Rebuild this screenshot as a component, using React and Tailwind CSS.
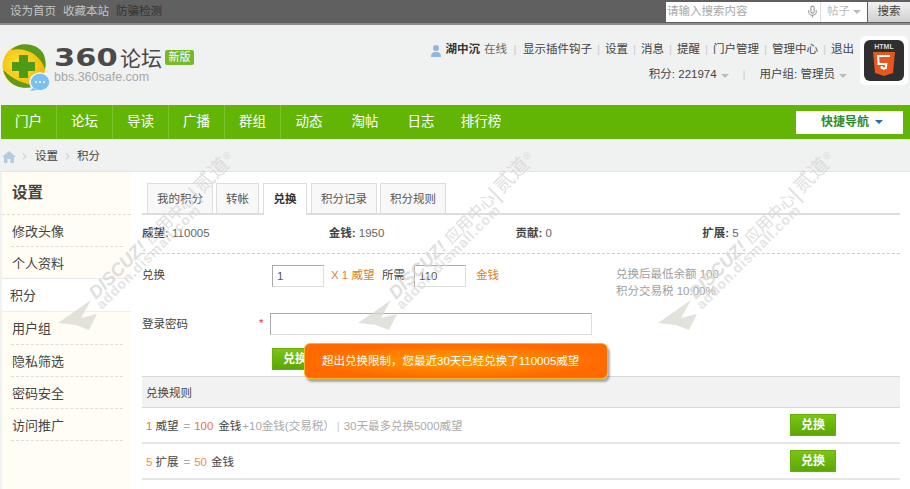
import { Mic, ChevronRight } from 'lucide-react';

const cjk = { fontFamily: '"Liberation Sans","Noto Sans CJK SC",sans-serif' };

function Caret({ color = 'border-t-[#bbb]' }) {
  return <span className={`inline-block w-0 h-0 border-x-[4px] border-x-transparent border-t-[4px] ${color}`} />;
}

function Logo() {
  return (
    <svg width="50" height="50" viewBox="0 0 50 50" className="shrink-0">
      <defs>
        <radialGradient id="ball" cx="0.4" cy="0.45" r="0.6">
          <stop offset="0" stopColor="#ffe23a" />
          <stop offset="1" stopColor="#f2b600" />
        </radialGradient>
      </defs>
      <circle cx="22" cy="23" r="21.5" fill="url(#ball)" />
      <path d="M9 7 C17 -1 33 -1 41 10 C44 16 44 21 43 26 C38 12 25 4 9 7Z" fill="#5c9a1c" />
      <path d="M2 28 C6 42 20 47 32 43 C22 41 10 37 2 28Z" fill="#5c9a1c" stroke="#5c9a1c" />
      <path d="M17 12h9v7h7v9h-7v7h-9v-7h-7v-9h7z" fill="#4e9a16" />
      <ellipse cx="38" cy="39" rx="10" ry="9" fill="#7cc0f0" stroke="#eaf6ff" strokeWidth="1.5" />
      <path d="M31 45l-3 3 7-1z" fill="#7cc0f0" />
      <circle cx="34" cy="39" r="1" fill="#fff" />
      <circle cx="38" cy="39" r="1" fill="#fff" />
      <circle cx="42" cy="39" r="1" fill="#fff" />
    </svg>
  );
}

function Html5Icon() {
  return (
    <div className="w-[48px] h-[49px] bg-white rounded-[5px] p-1 shrink-0">
      <svg viewBox="0 0 40 41" className="w-full h-full">
        <rect width="40" height="41" rx="6" fill="#2f2f2f" />
        <text x="20" y="9" textAnchor="middle" fontSize="7" fontWeight="700" fill="#ddd" fontFamily="Liberation Sans">HTML</text>
        <path d="M9 12h22l-2 21-9 3-9-3z" fill="#e8561f" />
        <path d="M26 16H14l.6 8h7.6l-.4 4-2 .7-2-.7-.1-2" fill="none" stroke="#fff" strokeWidth="2.2" />
      </svg>
    </div>
  );
}

// 水印 lies over the whole page
function Watermark({ left }) {
  return (
    <svg width="230" height="200" viewBox="0 0 230 200" className="absolute top-[140px] pointer-events-none overflow-visible" style={{ left }}>
      <path d="M8 183L41 160L31 178L47 174L39 190L26 185z" fill="#d8d8d2" opacity="0.75" />
      <g transform="rotate(-45 46 160)" fill="#d8d8d8" opacity="0.8" fontFamily="Liberation Sans,Noto Sans CJK SC,sans-serif">
        <text x="46" y="160" fontSize="18" fontWeight="700" fontStyle="italic">DISCUZ!</text>
        <text x="124" y="160" fontSize="16">应用中心</text>
        <text x="188" y="162" fontSize="22" fontWeight="300">|</text>
        <text x="196" y="160" fontSize="20">贰道</text>
        <text x="237" y="154" fontSize="10">®</text>
      </g>
      <text transform="rotate(-45 52 170)" x="52" y="170" fontSize="14" fontWeight="700" letterSpacing="0.8" fill="#dcdcdc" opacity="0.75" fontFamily="Liberation Sans,sans-serif">addon.dismall.com</text>
    </svg>
  );
}

function Sep() {
  return <span className="text-[#ccc] w-[13px] text-center">|</span>;
}

const tabs = [
  { name: '我的积分', cls: 'w-[66px]' },
  { name: '转帐', cls: 'w-[43px] ml-[3px]' },
  { name: '兑换', cls: 'w-[44px] ml-[4px]', active: true },
  { name: '积分记录', cls: 'w-[66px] ml-[4px]' },
  { name: '积分规则', cls: 'w-[66px] ml-[3px]' },
];

const side = [
  ['修改头像', 'dash'],
  ['个人资料', 'solid'],
  ['积分', 'active'],
  ['用户组', 'dashTall'],
  ['隐私筛选', 'dash'],
  ['密码安全', 'dash'],
  ['访问推广', 'dash'],
];

const nav = ['门户', '论坛', '导读', '广播', '群组', '动态', '淘帖', '日志', '排行榜'];

function GreenBtn({ className = '' }) {
  return (
    <button className={`h-[22px] bg-gradient-to-b from-[#7cc414] to-[#5aa806] border border-[#66b008] text-white text-[12px] font-bold ${className}`}>
      兑换
    </button>
  );
}

export default function App() {
  return (
    <div className="relative w-[910px] h-[489px] overflow-hidden bg-[#f0f1f1] text-[11.5px] text-[#444]" style={cjk}>
      {/* top bar */}
      <div className="h-[25px] bg-[#606060] border-b-2 border-[#8c8c8c] flex items-center justify-between pl-[10px]">
        <div className="flex gap-[7px] pt-[1px] text-[#c4c4c4]">
          <span>设为首页</span>
          <span>收藏本站</span>
          <span className="text-[#333]">防骗检测</span>
        </div>
        <div className="flex items-center gap-px">
          <div className="w-[201px] h-[20px] bg-white flex items-center text-[#a8a8a8]">
            <span className="pl-px flex-1">请输入搜索内容</span>
            <Mic size={13} className="text-[#999]" />
            <span className="ml-[1px] w-[47px] h-full border-l border-[#ddd] flex items-center justify-center gap-[3px] text-[#bbb]">帖子<Caret /></span>
          </div>
          <button className="w-[42px] h-[20px] bg-gradient-to-b from-[#f2f2f2] to-[#cfcfcf] text-[#444]">搜索</button>
        </div>
      </div>

      {/* header */}
      <div className="h-[80px] flex justify-between px-[2px]">
        <div className="flex items-start pt-[18px]">
          <Logo />
          <div className="ml-[2px] pt-[3px]">
            <div className="flex items-center h-[24px] text-[#4a4a4a]">
              <span className="inline-block w-[66px] origin-left scale-x-[1.27] font-bold text-[24px] leading-none" style={{ fontFamily: '"DejaVu Sans",sans-serif' }}>360</span>
              <span className="text-[21px] leading-none">论坛</span>
              <span className="ml-[3px] -mt-[2px] w-[29px] h-[15px] bg-[#78b82a] rounded-[2px] text-white text-[11px] leading-[15px] text-center">新版</span>
            </div>
            <div className="text-[12.5px] leading-[13px] mt-[1px] text-[#a9a9a9]">bbs.360safe.com</div>
          </div>
        </div>
        <div className="flex items-start gap-[6px] pt-[11px]">
          <div className="flex flex-col items-end pt-[5px]">
            <div className="flex items-center h-[18px] text-[#444]">
              <svg width="12" height="13" viewBox="0 0 12 13" className="mr-[4px]"><circle cx="6" cy="4" r="3" fill="#8fb7dd" /><path d="M1 13c0-4 2-5 5-5s5 1 5 5z" fill="#8fb7dd" /></svg>
              <b className="text-[#333]">湖中沉</b>
              <span className="ml-[4px] text-[#666]">在线</span>
              <span className="text-[#ccc] w-[16px] text-center">|</span>
              <span>显示插件钩子</span>
              <Sep />
              <span>设置</span><Sep />
              <span>消息</span><Sep />
              <span>提醒</span><Sep />
              <span>门户管理</span><Sep />
              <span>管理中心</span><Sep />
              <span>退出</span>
            </div>
            <div className="flex items-center h-[18px] mt-[7px] mr-[7px]">
              <span>积分: 221974</span>
              <span className="ml-[4px]"><Caret /></span>
              <span className="text-[#ccc] mx-[14px]">|</span>
              <span>用户组: 管理员</span>
              <span className="ml-[4px]"><Caret /></span>
            </div>
          </div>
          <Html5Icon />
        </div>
      </div>

      {/* nav */}
      <div className="ml-px h-[34px] bg-[#63b505] flex items-center justify-between pr-[7px]">
        <div className="flex h-full">
          {nav.map((n, i) => (
            <a key={n} className={`${i < 5 ? 'border-r border-[#7cc22e]' : ''} ${i === 8 ? 'w-[64px]' : 'w-[56px]'} flex items-center justify-center pt-[1px] text-[13.5px] text-white`}>{n}</a>
          ))}
        </div>
        <div className="w-[107px] h-[23px] bg-white flex items-center pl-[25px] gap-[6px] text-[12px] font-bold text-[#2f8a2f]">
          快捷导航<Caret color="border-t-[#1f6fa8]" />
        </div>
      </div>

      {/* breadcrumb */}
      <div className="h-[32px] flex items-center pl-[2px] pt-[3px]">
        <svg width="14" height="12" viewBox="0 0 14 12"><path d="M7 0L0 6h2v6h3.5V8h3v4H12V6h2z" fill="#b4cbe0" /></svg>
        <ChevronRight size={11} className="text-[#bbb] ml-[3px] mr-[5px]" />
        <span>设置</span>
        <ChevronRight size={11} className="text-[#bbb] mx-[4px]" />
        <span>积分</span>
      </div>

      {/* main */}
      <div className="flex bg-white border-t border-[#e4e4e4] h-[319px] border-l-2 border-l-[#f0f1f1]">
        <aside className="w-[129px] shrink-0 bg-[#fffdf4]">
          <div className="h-[43px] flex items-center pl-[10px] text-[15.5px] font-bold text-[#444] border-b border-dashed border-[#ddd]">设置</div>
          {side.map(([name, kind]) => (
            <div
              key={name}
              className={
                kind === 'active'
                  ? 'h-[33px] flex items-center pl-[8px] pt-[2px] bg-white border-b border-[#eee] text-[13px]'
                  : kind === 'solid'
                    ? 'h-[32px] flex items-center pl-[10px] pt-[2px] text-[13px] border-b border-[#e8e8e8]'
                    : kind === 'dashTall'
                      ? 'ml-[9px] mr-[8px] pl-px pt-[2px] h-[33px] flex items-center text-[13px] border-b border-dashed border-[#ddd]'
                      : 'ml-[9px] mr-[8px] pl-px pt-[2px] h-[32px] flex items-center text-[13px] border-b border-dashed border-[#ddd]'
              }
            >
              {name}
            </div>
          ))}
        </aside>

        <main className="ml-[11px] w-[758px]">
          <div className="h-[43px] flex items-end pl-[5px] border-b-2 border-[#ddd]">
            {tabs.map((t) => (
              <div
                key={t.name}
                className={`${t.cls} flex items-center justify-center border border-b-0 border-[#ddd] ${t.active ? 'h-[32px] -mb-[2px] pt-[1px] bg-white font-bold text-[#333]' : 'h-[30px] pt-[2px] bg-[#f8f8f8] text-[#555]'}`}
              >
                {t.name}
              </div>
            ))}
          </div>
          <div className="h-[39px] border-b border-dashed border-[#ccc]">
            <div className="w-[747px] h-full grid grid-cols-4 items-center">
              {[['威望', '110005'], ['金钱', '1950'], ['贡献', '0'], ['扩展', '5']].map(([k, v]) => (
                <div key={k}><b className="text-[#444]">{k}:</b> <span className="text-[#666]">{v}</span></div>
              ))}
            </div>
          </div>

          <div className="flex items-center h-[22px] mt-[11px]">
            <span className="w-[130px] shrink-0">兑换</span>
            <input readOnly value="1" className="w-[52px] h-[22px] border border-[#aaa] border-r-[#ddd] border-b-[#ddd] px-[4px] text-[#555]" />
            <span className="ml-[7px] w-[43px] shrink-0 whitespace-nowrap text-[#e87b3c]">X 1 <span className="text-[#e07b20]">威望</span></span>
            <span className="ml-[8px] w-[23px] shrink-0">所需</span>
            <input readOnly value="110" className="ml-[9px] w-[52px] h-[22px] border border-[#aaa] border-r-[#ddd] border-b-[#ddd] px-[4px] text-[#555]" />
            <span className="ml-[10px] w-[24px] shrink-0 text-[#e07b20]">金钱</span>
            <div className="ml-[116px] leading-[17px] text-[#a0a0a0] mt-[13px]">
              <div>兑换后最低余额 100</div>
              <div>积分交易税 10.00%</div>
            </div>
          </div>

          <div className="flex items-center h-[22px] mt-[26px]">
            <span className="w-[117px] shrink-0 pt-[2px]">登录密码</span>
            <span className="w-[11px] text-[#e33]">*</span>
            <input readOnly className="w-[322px] h-[22px] border border-[#aaa] border-r-[#ddd] border-b-[#ddd]" />
          </div>
          <GreenBtn className="ml-[130px] mt-[13px] w-[46px] block" />

          <div className="mt-[6px] h-[32px] flex items-center pl-[4px] pt-[3px] bg-[#f2f2f2] border-y border-[#d8d8d8]">兑换规则</div>
          <div className="h-[36px] flex items-center justify-between pl-[4px] pr-[64px] border-b-2 border-[#e6e6e6]">
            <div className="mt-[4px] whitespace-nowrap">
              <span className="text-[#e8734a]">1</span>
              <span className="ml-[3px]">威望</span>
              <span className="ml-[5px] text-[#aaa]">=</span>
              <span className="ml-[4px] text-[#e8734a]">100</span>
              <span className="ml-[5px]">金钱</span>
              <span className="ml-[1px] text-[#aaa]">+10金钱(交易税）</span>
              <span className="ml-[2px] text-[#ccc]">|</span>
              <span className="ml-[4px] text-[#aaa]">30天最多兑换5000威望</span>
            </div>
            <GreenBtn className="w-[46px]" />
          </div>
          <div className="h-[36px] flex items-center justify-between pl-[4px] pr-[64px] border-b-2 border-[#e6e6e6]">
            <div className="mt-[4px] whitespace-nowrap">
              <span className="text-[#e8904a]">5</span>
              <span className="ml-[3px]">扩展</span>
              <span className="ml-[5px] text-[#aaa]">=</span>
              <span className="ml-[4px] text-[#e8904a]">50</span>
              <span className="ml-[4px]">金钱</span>
            </div>
            <GreenBtn className="w-[46px]" />
          </div>
        </main>
      </div>

      <Watermark left={50} />
      <Watermark left={350} />
      <Watermark left={650} />

      {/* toast */}
      <div className="absolute left-[304px] top-[343px] w-[304px] h-[36px] rounded-[6px] border border-[#f5b81f] bg-[radial-gradient(ellipse_at_center,#ff9f00_0%,#ff6a00_70%)] shadow-[2px_3px_2px_rgba(0,0,0,0.3)] flex items-center pl-[17px] pt-[1px] text-white">
        超出兑换限制，您最近30天已经兑换了110005威望
      </div>
    </div>
  );
}
